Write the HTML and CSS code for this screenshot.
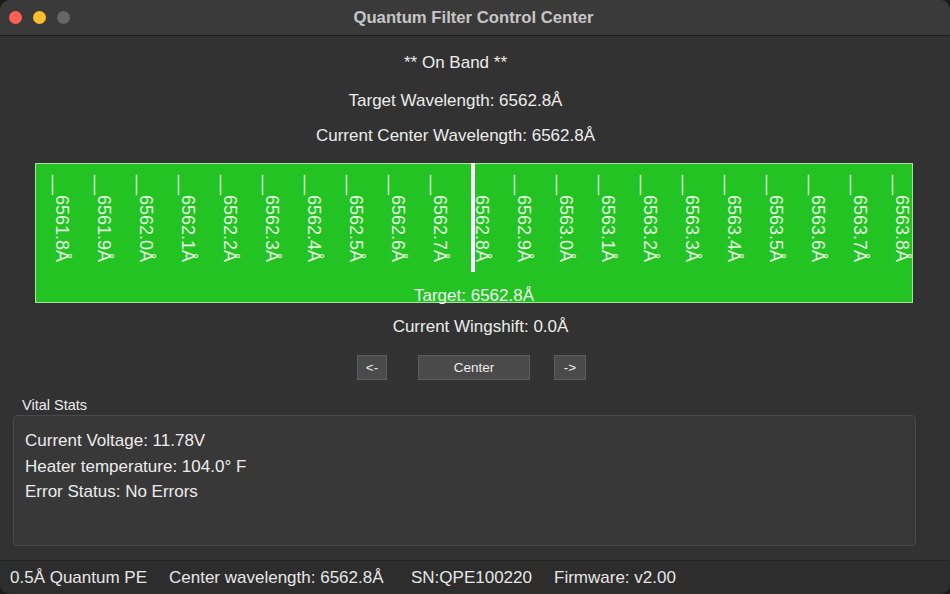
FILE: index.html
```html
<!DOCTYPE html>
<html lang="en">
<head>
    <meta charset="UTF-8">
    <meta name="viewport" content="width=device-width, initial-scale=1.0">
    <title>Quantum Filter Control Center</title>
    <link rel="stylesheet" href="styles.css">
</head>
<body>
    <div class="window">
        <div class="titlebar">
            <div class="lights">
                <span class="light red"></span>
                <span class="light yellow"></span>
                <span class="light gray"></span>
            </div>
            <div class="title">Quantum Filter Control Center</div>
        </div>

        <div class="main">
            <div class="line band">** On Band **</div>
            <div class="line target">Target Wavelength: 6562.8Å</div>
            <div class="line current">Current Center Wavelength: 6562.8Å</div>

            <div class="ruler">
                <div class="ticks">
                    <div class="tick"><span>__</span>6561.8Å</div>
                    <div class="tick"><span>__</span>6561.9Å</div>
                    <div class="tick"><span>__</span>6562.0Å</div>
                    <div class="tick"><span>__</span>6562.1Å</div>
                    <div class="tick"><span>__</span>6562.2Å</div>
                    <div class="tick"><span>__</span>6562.3Å</div>
                    <div class="tick"><span>__</span>6562.4Å</div>
                    <div class="tick"><span>__</span>6562.5Å</div>
                    <div class="tick"><span>__</span>6562.6Å</div>
                    <div class="tick"><span>__</span>6562.7Å</div>
                    <div class="tick is-target"><span>__</span>6562.8Å</div>
                    <div class="tick"><span>__</span>6562.9Å</div>
                    <div class="tick"><span>__</span>6563.0Å</div>
                    <div class="tick"><span>__</span>6563.1Å</div>
                    <div class="tick"><span>__</span>6563.2Å</div>
                    <div class="tick"><span>__</span>6563.3Å</div>
                    <div class="tick"><span>__</span>6563.4Å</div>
                    <div class="tick"><span>__</span>6563.5Å</div>
                    <div class="tick"><span>__</span>6563.6Å</div>
                    <div class="tick"><span>__</span>6563.7Å</div>
                    <div class="tick"><span>__</span>6563.8Å</div>
                </div>
                <div class="ruler-caption">Target: 6562.8Å</div>
            </div>

            <div class="line wingshift">Current Wingshift: 0.0Å</div>

            <div class="buttons">
                <button class="btn btn-left">&lt;-</button>
                <button class="btn btn-center">Center</button>
                <button class="btn btn-right">-&gt;</button>
            </div>

            <div class="vitals">
                <div class="vitals-label">Vital Stats</div>
                <div class="vitals-box">
                    <div class="stat">Current Voltage: 11.78V</div>
                    <div class="stat">Heater temperature: 104.0° F</div>
                    <div class="stat">Error Status: No Errors</div>
                </div>
            </div>
        </div>

        <div class="statusbar">
            <span class="field field-model">0.5Å Quantum PE</span>
            <span class="field field-center">Center wavelength: 6562.8Å</span>
            <span class="field field-sn">SN:QPE100220</span>
            <span class="field">Firmware: v2.00</span>
        </div>
    </div>
</body>
</html>
```

FILE: styles.css
```css
html {
    background-color: #1c1c1c;
}
body {
    margin: 0;
    font-family: 'Liberation Sans', Arial, sans-serif;
    color: #ececec;
}
.window {
    width: 950px;
    height: 594px;
    background-color: #323232;
    border-radius: 10px;
    overflow: hidden;
    display: flex;
    flex-direction: column;
}
.titlebar {
    height: 35px;
    flex: none;
    background-color: #3b3a3b;
    border-bottom: 1px solid #1d1d1d;
    display: flex;
    align-items: center;
    justify-content: center;
    position: relative;
}
.lights {
    position: absolute;
    left: 9px;
    top: 11px;
    display: flex;
    gap: 11px;
}
.light {
    width: 13px;
    height: 13px;
    border-radius: 50%;
}
.red { background-color: #fe5f57; }
.yellow { background-color: #febc2e; }
.gray { background-color: #676667; }
.title {
    font-weight: bold;
    font-size: 16.7px;
    color: #c6c6c6;
    margin-right: 3px;
}
.main {
    flex: 1;
    display: flex;
    flex-direction: column;
    align-items: center;
}
.line {
    font-size: 17px;
    line-height: 20px;
    text-align: center;
}
.band { margin-top: 17px; margin-right: 39px; }
.target { margin-top: 18px; margin-right: 39px; }
.current { margin-top: 15px; margin-right: 39px; }
.ruler {
    margin-top: 17px;
    margin-right: 2px;
    width: 876px;
    height: 138px;
    background-color: #22c322;
    border: 1px solid #a2e69c;
    display: flex;
    flex-direction: column;
    justify-content: space-between;
}
.ticks {
    display: flex;
    gap: 24px;
    padding-left: 17px;
    padding-top: 11px;
}
.tick {
    width: 18px;
    flex: none;
    writing-mode: vertical-rl;
    text-orientation: sideways;
    font-size: 18px;
    line-height: 18px;
    color: #e4f6e0;
    white-space: nowrap;
    position: relative;
}
.tick.is-target span {
    color: transparent;
}
.tick.is-target::before {
    content: "";
    position: absolute;
    left: -2px;
    top: -12px;
    width: 4px;
    height: 109px;
    background-color: #ffffff;
}
.ruler-caption {
    text-align: center;
    font-size: 17px;
    line-height: 20px;
    color: #f4f4f4;
    margin-bottom: -4px;
}
.wingshift { margin-top: 14px; margin-left: 11px; }
.buttons {
    margin-top: 18px;
    display: flex;
    padding-right: 7px;
}
.btn {
    height: 25px;
    background-color: #4a4a4a;
    border: 1px solid #5d5d5d;
    color: #ececec;
    font-family: inherit;
    font-size: 13.5px;
    padding: 0;
    cursor: pointer;
}
.btn-left { width: 30px; margin-right: 31px; }
.btn-center { width: 112px; }
.btn-right { width: 32px; margin-left: 24px; }
.vitals {
    align-self: flex-start;
    margin-left: 13px;
    margin-top: 17px;
}
.vitals-label {
    font-size: 14.5px;
    line-height: 17px;
    margin-left: 9px;
    color: #ececec;
}
.vitals-box {
    margin-top: 1px;
    width: 903px;
    height: 131px;
    box-sizing: border-box;
    background-color: #383838;
    border: 1px solid #494949;
    border-radius: 4px;
    padding: 15px 0 0 11px;
}
.stat {
    font-size: 17px;
    line-height: 20px;
    margin-bottom: 5.5px;
}
.statusbar {
    height: 33px;
    flex: none;
    border-top: 1px solid #242424;
    background-color: #2d2d2d;
    display: flex;
    align-items: center;
    padding-left: 10px;
    font-size: 17px;
    color: #e6e6e6;
}
.field {
    white-space: nowrap;
}
.field-model { width: 159px; }
.field-center { width: 242px; }
.field-sn { width: 143px; }
```
